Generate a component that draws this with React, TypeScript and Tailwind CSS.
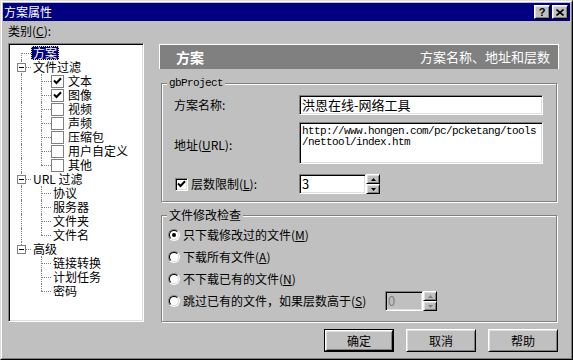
import React from "react";

const RAISED =
  "border border-t-white border-l-white border-r-black border-b-black shadow-[inset_1px_1px_0_#dfdfdf,inset_-1px_-1px_0_#808080]";
const SUNKEN =
  "border border-t-[#808080] border-l-[#808080] border-r-white border-b-white shadow-[inset_1px_1px_0_#000,inset_-1px_-1px_0_#dfdfdf]";
const MONO = "font-['Liberation_Mono',monospace]";

type Conn = "R" | "T" | "L" | "I" | "";

interface TreeRow {
  label: string;
  cols: Conn[];
  box?: boolean;
  check?: boolean;
  selected?: boolean;
}

const rows: TreeRow[] = [
  { label: "方案", cols: ["R"], selected: true },
  { label: "文件过滤", cols: ["T"], box: true },
  { label: "文本", cols: ["I", "T"], check: true },
  { label: "图像", cols: ["I", "T"], check: true },
  { label: "视频", cols: ["I", "T"], check: false },
  { label: "声频", cols: ["I", "T"], check: false },
  { label: "压缩包", cols: ["I", "T"], check: false },
  { label: "用户自定义", cols: ["I", "T"], check: false },
  { label: "其他", cols: ["I", "L"], check: false },
  { label: "URL 过滤", cols: ["T"], box: true },
  { label: "协议", cols: ["I", "T"] },
  { label: "服务器", cols: ["I", "T"] },
  { label: "文件夹", cols: ["I", "T"] },
  { label: "文件名", cols: ["I", "L"] },
  { label: "高级", cols: ["L"], box: true },
  { label: "链接转换", cols: ["", "T"] },
  { label: "计划任务", cols: ["", "T"] },
  { label: "密码", cols: ["", "L"] },
];

function CheckMark() {
  return (
    <svg width="9" height="8" viewBox="0 0 9 8">
      <path d="M1 3.5L3.5 6L8 1.2" fill="none" stroke="#000" strokeWidth={2} />
    </svg>
  );
}

function ConnCell({ kind, box }: { kind: Conn; box?: boolean }) {
  return (
    <div className="relative h-full w-[20px] shrink-0">
      {(kind === "T" || kind === "I") && (
        <div className="absolute left-[10px] top-0 h-full border-l border-dotted border-[#808080]" />
      )}
      {kind === "L" && <div className="absolute left-[10px] top-0 h-[7px] border-l border-dotted border-[#808080]" />}
      {kind === "R" && <div className="absolute left-[10px] top-[7px] h-[7px] border-l border-dotted border-[#808080]" />}
      {kind !== "I" && kind !== "" && (
        <div className="absolute left-[10px] top-[7px] w-[10px] border-t border-dotted border-[#808080]" />
      )}
      {box && (
        <div className="absolute left-[6px] top-[3px] flex h-[9px] w-[9px] items-center justify-center border border-[#808080] bg-white">
          <div className="h-px w-[5px] bg-black" />
        </div>
      )}
    </div>
  );
}

function Tree() {
  return (
    <div className={`h-[279px] w-[136px] bg-white p-[2px] ${SUNKEN}`}>
      {rows.map((r) => (
        <div key={r.label} className="flex h-[14px] items-center">
          {r.cols.map((c, i) => (
            <ConnCell key={i} kind={c} box={i === 0 && r.box} />
          ))}
          {r.check !== undefined && (
            <div className="mr-[2px] flex h-[13px] w-[13px] shrink-0 items-center justify-center border border-[#808080] bg-white">
              {r.check && <CheckMark />}
            </div>
          )}
          <span
            className={
              r.selected
                ? "h-[14px] whitespace-nowrap border border-dotted border-[#e0e070] bg-[#000080] px-[1px] leading-[12px] text-white"
                : "h-[14px] whitespace-nowrap px-[2px] leading-[14px]"
            }
          >
            {r.label}
          </span>
        </div>
      ))}
    </div>
  );
}

function Spin({ disabled }: { disabled?: boolean }) {
  const c = disabled ? "#808080" : "#000";
  return (
    <div className="flex h-full w-[14px] flex-col">
      {["M2.5 0L5 3H0Z", "M0 0H5L2.5 3Z"].map((d) => (
        <div key={d} className={`flex flex-1 items-center justify-center bg-[#c0c0c0] ${RAISED}`}>
          <svg width="5" height="3" viewBox="0 0 5 3">
            <path d={d} fill={c} />
          </svg>
        </div>
      ))}
    </div>
  );
}

function Radio({ on }: { on?: boolean }) {
  return (
    <div className="h-[12px] w-[12px] shrink-0 rounded-full border border-t-[#808080] border-l-[#808080] border-r-white border-b-white">
      <div className="flex h-full w-full items-center justify-center rounded-full border border-t-black border-l-black border-r-[#dfdfdf] border-b-[#dfdfdf] bg-white">
        {on && <div className="h-[4px] w-[4px] rounded-full bg-black" />}
      </div>
    </div>
  );
}

function GroupBox({ label, mono, className, children }: { label: string; mono?: boolean; className: string; children: React.ReactNode }) {
  return (
    <div className={`relative mx-[2px] border border-[#808080] shadow-[1px_1px_0_#fff,inset_1px_1px_0_#fff] ${className}`}>
      <span
        className={`absolute left-[5px] top-[-8px] bg-[#c0c0c0] px-[2px] leading-[14px] ${mono ? `${MONO} text-[11px] tracking-[-0.6px]` : ""}`}
      >
        {label}
      </span>
      {children}
    </div>
  );
}

function Button({ label, primary }: { label: string; primary?: boolean }) {
  return (
    <div className={`h-[23px] w-[70px] ${primary ? "border border-black" : ""}`}>
      <div className={`flex h-full w-full items-center justify-center bg-[#c0c0c0] ${RAISED}`}>{label}</div>
    </div>
  );
}

export default function App() {
  return (
    <div className="h-[360px] w-[573px] border border-t-[#dfdfdf] border-l-[#dfdfdf] border-r-black border-b-black bg-[#c0c0c0] font-['Noto_Sans_CJK_SC',sans-serif] text-[12px] text-black">
      <div className="flex h-full flex-col border border-t-white border-l-white border-r-[#808080] border-b-[#808080] p-px">
        {/* Title bar */}
        <div className="flex h-[18px] shrink-0 items-center justify-between bg-[#000080] pl-[1px] pr-[2px]">
          <span className="leading-[14px] text-white">方案属性</span>
          <div className="flex gap-[2px]">
            <div className={`flex h-[14px] w-[16px] items-center justify-center bg-[#c0c0c0] ${RAISED}`}>
              <span className="font-['Liberation_Sans',sans-serif] text-[11px] font-bold leading-none">?</span>
            </div>
            <div className={`flex h-[14px] w-[16px] items-center justify-center bg-[#c0c0c0] ${RAISED}`}>
              <svg width="8" height="7" viewBox="0 0 8 7">
                <path d="M0.5 0.5L7.5 6.5M7.5 0.5L0.5 6.5" stroke="#000" strokeWidth={1.6} />
              </svg>
            </div>
          </div>
        </div>

        {/* Body */}
        <div className="flex flex-1 pl-[5px]">
          {/* Left: categories */}
          <div className="w-[136px] shrink-0">
            <div className="flex h-[22px] items-center pb-[2px]">
              类别(<u>C</u>):
            </div>
            <Tree />
          </div>

          {/* Right: settings */}
          <div className="ml-[15px] mt-[23px] flex w-[400px] flex-col">
            <div className="flex h-[25px] items-center justify-between border-l border-r border-t border-white bg-[#808080] pl-[16px] pr-[8px] text-white">
              <span className="text-[14px] font-bold">方案</span>
              <span className="text-[13px]">方案名称、地址和层数</span>
            </div>

            <GroupBox label="gbProject" mono className="mt-[14px] h-[119px] pt-[11px]">
              <div className="flex h-[20px] items-center">
                <span className="w-[137px] pl-[12px]">方案名称:</span>
                <div className={`flex h-[20px] w-[244px] items-center bg-white pl-[2px] text-[13px] ${SUNKEN}`}>
                  洪恩在线-网络工具
                </div>
              </div>
              <div className="mt-[7px] flex items-center">
                <span className="w-[137px] pl-[12px] pt-[4px]">
                  地址(<u>U</u>RL):
                </span>
                <div className={`h-[42px] w-[244px] bg-white pl-[2px] pt-[3px] ${SUNKEN}`}>
                  <div className={`${MONO} text-[11px] leading-[11px] tracking-[-0.6px]`}>http://www.hongen.com/pc/pcketang/tools</div>
                  <div className={`${MONO} text-[11px] leading-[11px] tracking-[-0.6px]`}>/nettool/index.htm</div>
                </div>
              </div>
              <div className="mt-[10px] flex h-[20px] items-center">
                <div className="flex w-[137px] items-center pl-[13px]">
                  <div className={`flex h-[13px] w-[13px] items-center justify-center bg-white ${SUNKEN}`}>
                    <CheckMark />
                  </div>
                  <span className="ml-[3px]">
                    层数限制(<u>L</u>):
                  </span>
                </div>
                <div className={`flex h-[20px] w-[67px] items-center bg-white pl-[2px] text-[13px] ${SUNKEN}`}>3</div>
                <Spin />
              </div>
            </GroupBox>

            <GroupBox label="文件修改检查" className="mt-[13px] h-[107px] pt-[8px]">
              {[
                { t: "只下载修改过的文件", k: "M", on: true },
                { t: "下载所有文件", k: "A" },
                { t: "不下载已有的文件", k: "N" },
              ].map((o) => (
                <div key={o.k} className="flex h-[22px] items-center pl-[6px]">
                  <Radio on={o.on} />
                  <span className="ml-[3px]">
                    {o.t}(<u>{o.k}</u>)
                  </span>
                </div>
              ))}
              <div className="flex h-[22px] items-center pl-[6px]">
                <Radio />
                <span className="ml-[3px] w-[202px]">
                  跳过已有的文件，如果层数高于(<u>S</u>)
                </span>
                <div className="flex h-[20px]">
                  <div className={`flex h-[20px] w-[38px] items-center bg-[#c0c0c0] pl-[2px] text-[13px] text-[#808080] ${SUNKEN}`}>0</div>
                  <Spin disabled />
                </div>
              </div>
            </GroupBox>

            <div className="mt-[7px] flex justify-end gap-[12px] pr-[1px]">
              <Button label="确定" primary />
              <Button label="取消" />
              <Button label="帮助" />
            </div>
          </div>
        </div>
      </div>
    </div>
  );
}
